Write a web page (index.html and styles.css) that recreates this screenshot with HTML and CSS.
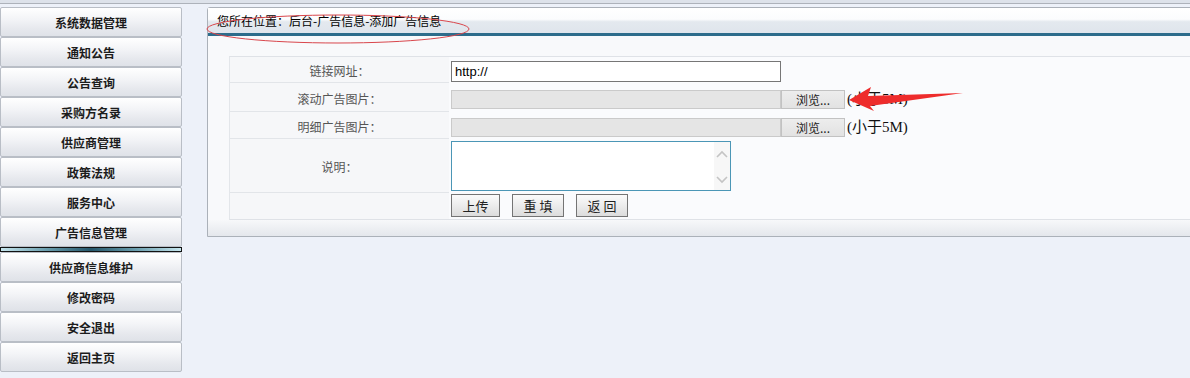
FILE: index.html
```html
<!DOCTYPE html>
<html lang="zh-CN">
<head>
    <meta charset="UTF-8">
    <meta name="viewport" content="width=device-width, initial-scale=1.0">
    <title>添加广告信息</title>
    <link rel="stylesheet" href="styles.css">
</head>
<body>
    <div class="topline"></div>
    <div class="page">
        <div class="menu">
            <div class="menu-item">系统数据管理</div>
            <div class="menu-item">通知公告</div>
            <div class="menu-item">公告查询</div>
            <div class="menu-item">采购方名录</div>
            <div class="menu-item">供应商管理</div>
            <div class="menu-item">政策法规</div>
            <div class="menu-item">服务中心</div>
            <div class="menu-item">广告信息管理</div>
            <div class="menu-split"></div>
            <div class="menu-item">供应商信息维护</div>
            <div class="menu-item">修改密码</div>
            <div class="menu-item">安全退出</div>
            <div class="menu-item">返回主页</div>
        </div>

        <div class="panel">
            <div class="panel-head">您所在位置：后台-广告信息-添加广告信息</div>
            <div class="panel-body">
                <div class="form">
                    <div class="row row-url">
                        <div class="label">链接网址：</div>
                        <div class="field">
                            <input class="text" type="text" value="http://">
                        </div>
                    </div>
                    <div class="row row-file1">
                        <div class="label">滚动广告图片：</div>
                        <div class="field">
                            <div class="file-box"></div>
                            <div class="browse">浏览...</div>
                            <span class="hint">(小于5M)</span>
                        </div>
                    </div>
                    <div class="row row-file2">
                        <div class="label">明细广告图片：</div>
                        <div class="field">
                            <div class="file-box"></div>
                            <div class="browse">浏览...</div>
                            <span class="hint">(小于5M)</span>
                        </div>
                    </div>
                    <div class="row row-memo">
                        <div class="label">说明：</div>
                        <div class="field">
                            <div class="memo">
                                <textarea></textarea>
                                <div class="scroll">
                                    <svg width="12" height="8" viewBox="0 0 12 8"><path d="M1 7 L6 2 L11 7" fill="none" stroke="#c4c4c4" stroke-width="1.6"/></svg>
                                    <svg width="12" height="8" viewBox="0 0 12 8"><path d="M1 1 L6 6 L11 1" fill="none" stroke="#c4c4c4" stroke-width="1.6"/></svg>
                                </div>
                            </div>
                        </div>
                    </div>
                    <div class="row row-buttons">
                        <div class="label label-empty"></div>
                        <div class="field">
                            <button class="btn btn-upload">上传</button>
                            <button class="btn">重 填</button>
                            <button class="btn">返 回</button>
                        </div>
                    </div>
                </div>
            </div>
            <div class="panel-foot"></div>
        </div>
    </div>

    <!-- red marks drawn over the screenshot -->
    <svg class="marks" width="1190" height="378" viewBox="0 0 1190 378">
        <ellipse cx="338" cy="29" rx="131" ry="14" fill="none" stroke="#d9464c" stroke-width="1"/>
        <polygon points="849,100 871,87 868,96 963,93 870,106 874,111" fill="#ee2c2c"/>
    </svg>
</body>
</html>
```

FILE: styles.css
```css
body{
    margin: 0;
    background: #edf1f9;
    font-family: "Noto Sans CJK SC", sans-serif;
    font-size: 12px;
    overflow: hidden;
    position: relative;
    height: 378px;
}
.topline{
    height: 3px;
    background: #dde2ea;
    border-bottom: 1px solid #adb2ba;
}
.page{
    display: flex;
    padding-top: 3px;
}
.menu{
    width: 182px;
    flex-shrink: 0;
    display: flex;
    flex-direction: column;
}
.menu-item{
    height: 30px;
    box-sizing: border-box;
    border: 1px solid #b9bec6;
    border-radius: 2px;
    background: linear-gradient(#ffffff, #f3f4f7 40%, #e6e8ed 75%, #dfe2e8);
    display: flex;
    align-items: center;
    justify-content: center;
    font-weight: bold;
    color: #1c1c1c;
}
.menu-split{
    height: 5px;
    box-sizing: border-box;
    border: 1px solid #121212;
    background: linear-gradient(90deg, #c6e6ee, #6a9eae 25%, #24566a 50%, #6a9eae 75%, #c6e6ee);
}
.panel{
    flex: 1;
    margin-left: 25px;
    margin-right: -20px;
    height: 230px;
    box-sizing: border-box;
    border: 1px solid #abb1b9;
    border-radius: 3px 0 0 0;
    background: #f8f9fb;
    display: flex;
    flex-direction: column;
}
.panel-head{
    height: 28px;
    box-sizing: border-box;
    padding: 4px 0 0 9px;
    border-bottom: 3px solid #2d6c8b;
    background: linear-gradient(#ffffff, #fbfcfd 45%, #e4e9ef 55%, #dfe5ec);
    color: #000;
}
.panel-body{
    padding: 20px 0 0 21px;
}
.form{
    border-top: 1px solid #dfe2e7;
    border-bottom: 1px solid #dfe2e7;
    border-left: 1px solid #e3e6ea;
    background: #fafbfd;
}
.row{
    display: flex;
}
.label{
    width: 219px;
    flex-shrink: 0;
    box-sizing: border-box;
    padding-top: 2px;
    display: flex;
    align-items: center;
    justify-content: center;
    border-bottom: 1px solid #e2e5e9;
    background: #f6f7f9;
    color: #555;
}
.label-empty{
    border-bottom: none;
}
.field{
    flex: 1;
    display: flex;
    align-items: flex-start;
    padding-left: 2px;
}
.row-url{ height: 26px; }
.row-url .field{ padding-top: 4px; }
.row-file1{ height: 29px; }
.row-file1 .field{ padding-top: 7px; }
.row-file2{ height: 27px; }
.row-file2 .field{ padding-top: 6px; }
.row-memo{ height: 54px; }
.row-memo .field{ padding-top: 2px; }
.row-buttons{ height: 26px; }
.row-buttons .field{ padding-top: 1px; }

.text{
    width: 330px;
    height: 21px;
    box-sizing: border-box;
    margin: 0;
    padding: 0 3px;
    border: 1px solid #767676;
    font-family: "Liberation Sans", Arial, sans-serif;
    font-size: 13px;
    color: #000;
    background: #fff;
}
.file-box{
    width: 330px;
    height: 19px;
    box-sizing: border-box;
    border: 1px solid #cacaca;
    background: #e5e5e5;
}
.browse{
    width: 64px;
    height: 19px;
    box-sizing: border-box;
    border: 1px solid #c2c2c2;
    background: linear-gradient(#ededed, #e2e2e2);
    display: flex;
    align-items: center;
    justify-content: center;
    color: #222;
}
.hint{
    margin-left: 2px;
    font-family: "Liberation Serif", "Noto Sans CJK SC", serif;
    font-size: 15px;
    line-height: 19px;
    color: #111;
}
.memo{
    width: 280px;
    height: 50px;
    box-sizing: border-box;
    border: 1px solid #4b96b6;
    background: #fff;
    display: flex;
}
.memo textarea{
    flex: 1;
    border: none;
    outline: none;
    resize: none;
    margin: 0;
    padding: 2px;
    background: transparent;
}
.scroll{
    width: 16px;
    background: #f7f7f7;
    display: flex;
    flex-direction: column;
    justify-content: space-between;
    align-items: center;
    padding: 8px 0 6px;
}
.btn{
    width: 52px;
    height: 23px;
    box-sizing: border-box;
    margin: 0 12px 0 0;
    padding: 0;
    border: 1px solid #747474;
    background: linear-gradient(#fbfbfb, #ececec 50%, #dcdcdc);
    font-family: "Noto Sans CJK SC", sans-serif;
    font-size: 13px;
    color: #222;
}
.btn-upload{
    width: 49px;
    margin-right: 12px;
}
.panel-foot{
    flex: 1;
    margin-top: 0;
    background: linear-gradient(#f7f8fa, #e4e7ec);
}
.marks{
    position: absolute;
    top: 0;
    left: 0;
    pointer-events: none;
}
```
